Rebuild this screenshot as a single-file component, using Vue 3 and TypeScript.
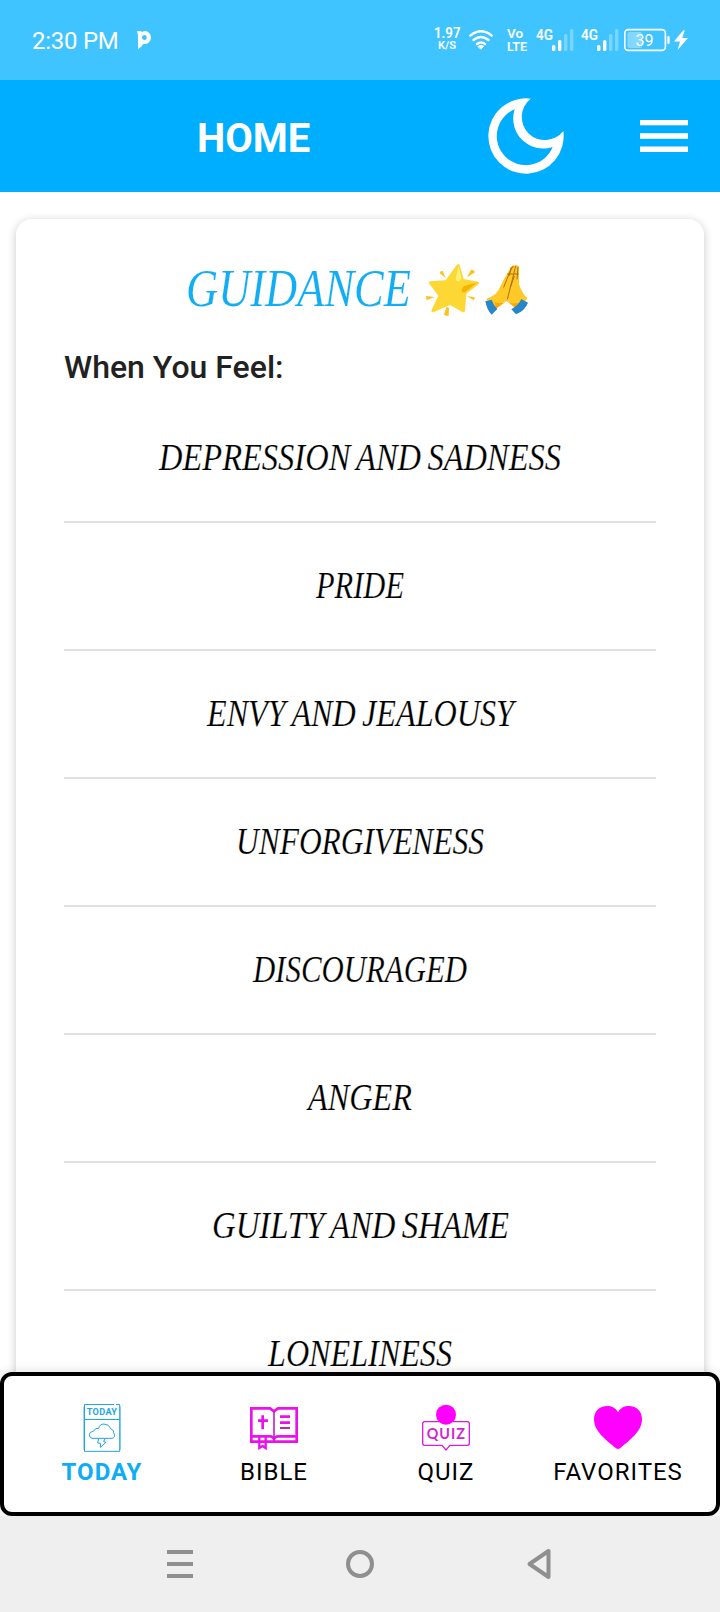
<script setup lang="ts">
interface Feeling {
  label: string
  width: number
}

const feelings: Feeling[] = [
  { label: 'DEPRESSION AND SADNESS', width: 402 },
  { label: 'PRIDE', width: 88 },
  { label: 'ENVY AND JEALOUSY', width: 307 },
  { label: 'UNFORGIVENESS', width: 248 },
  { label: 'DISCOURAGED', width: 214 },
  { label: 'ANGER', width: 104 },
  { label: 'GUILTY AND SHAME', width: 297 },
  { label: 'LONELINESS', width: 184 },
]

const simCards = [1, 2]
</script>

<template>
  <div class="screen">
    <header class="status">
      <span class="clock">2:30 PM</span>
      <svg class="app-mark" width="14" height="20" viewBox="0 0 14 20">
        <path d="M0 1 H4 L5 2.2 Q6.500 1 8 1 A6 6.500 0 0 1 8 14 H6 L4.500 16.500 L1 19 V5 Z M7.300 5 A2.400 2.500 0 1 0 7.400 10 A2.400 2.500 0 1 0 7.300 5 Z" fill="#fff" fill-rule="evenodd" />
      </svg>
      <div class="indicators">
        <svg width="27" height="80" viewBox="0 0 27 80" class="ink">
          <text x="0" y="38" font-size="15" textLength="26.5" lengthAdjust="spacingAndGlyphs">1.97</text>
          <text x="4" y="49" font-size="11" textLength="18" lengthAdjust="spacingAndGlyphs">K/S</text>
        </svg>
        <svg class="wifi" width="24" height="80" viewBox="0 0 24 80" fill="none" stroke="#fff" stroke-width="2.4" stroke-linecap="round">
          <path d="M1.3 35.6 Q12 27 22.7 35.6 M4.5 40 Q12 33.8 19.5 40 M8 44 Q12 41 16 44" />
          <path d="M9.3 46.2 Q12 44.4 14.7 46.2 L12 49 Z" fill="#fff" stroke-width="1" />
        </svg>
        <svg class="volte ink" width="20" height="80" viewBox="0 0 20 80">
          <text x="0" y="38.4" font-size="13" textLength="16" lengthAdjust="spacingAndGlyphs">Vo</text>
          <text x="0" y="51" font-size="13" textLength="20" lengthAdjust="spacingAndGlyphs">LTE</text>
        </svg>
        <svg v-for="sim in simCards" :key="sim" class="sim ink" width="38" height="80" viewBox="0 0 38 80">
          <text x="0" y="40" font-size="14" textLength="17" lengthAdjust="spacingAndGlyphs">4G</text>
          <rect x="16" y="45" width="3.4" height="6" rx="1.5" />
          <rect x="22" y="40" width="3.4" height="11" rx="1.5" />
          <rect x="28" y="34" width="3.4" height="17" rx="1.5" opacity="0.3" />
          <rect x="34" y="29" width="3.4" height="22" rx="1.5" opacity="0.3" />
        </svg>
        <svg class="battery" width="46" height="80" viewBox="0 0 46 80">
          <rect x="0.8" y="29.6" width="40.6" height="20.8" rx="3.5" fill="none" stroke="#fff" stroke-width="1.6" />
          <rect x="3.5" y="32" width="14.5" height="16" rx="2" fill="#fff" opacity="0.35" />
          <rect x="43.3" y="36" width="2.3" height="8" rx="1" fill="#fff" />
          <text x="11.6" y="45.6" font-size="16" fill="#fff" textLength="18" lengthAdjust="spacingAndGlyphs">39</text>
        </svg>
        <svg class="bolt" width="14" height="80" viewBox="0 0 14 80">
          <path d="M9.5 30 L0 41.5 H6 L3.6 50 L14 38 H8.2 L10.8 30.5 Z" fill="#fff" />
        </svg>
      </div>
    </header>

    <div class="toolbar">
      <h1 class="title">HOME</h1>
      <svg class="moon" width="76" height="77" viewBox="85 53 228 231">
        <path fill="#fff" fill-rule="evenodd" d="M213 55 A113 113 0 1 0 311 152 A69.5 69.5 0 1 1 213 55 Z M165 87 A87 87 0 1 0 279 200 A90 90 0 0 1 165 87 Z" />
      </svg>
      <svg class="burger" width="48" height="32" viewBox="0 0 48 32" fill="#fff">
        <rect width="48" height="5.3" />
        <rect y="13.2" width="48" height="5.6" />
        <rect y="26.5" width="48" height="5.5" />
      </svg>
    </div>

    <main class="content">
      <section class="card">
        <div class="heading">
          <svg width="224" height="80" viewBox="0 0 224 80">
            <text class="serif blue" x="0" y="55.500" font-size="52.5" textLength="225" lengthAdjust="spacingAndGlyphs">GUIDANCE</text>
          </svg>
          <svg class="emoji" width="130" height="80" viewBox="0 0 390 240">
            <g fill="#fcc21b">
              <path d="M77 69 Q79 62 86 62 L95 84 Z M171 59 Q181 59 183 67 L159 82 Z M36 138 L61 141 L38 151 Z M158 138 L182 142 L180 151 Z M97 171 L105 173 L104 197 Q95 198 90 194 Z" />
            </g>
            <path d="M136 43 L149 87 L192 95 Q198 98 193 103 L157 131 L153 183 Q151 189 145 186 L108 165 L58 187 Q50 187 53 179 L73 137 L46 101 Q42 94 50 94 L95 91 L128 45 Q133 40 136 43 Z" fill="#fdd835" />
            <path d="M133 49 L142 83 Q139 96 130 94 Q124 91 126 80 Z" fill="#fff176" />
            <path d="M190 97 L151 108 Q140 117 144 125 Q149 131 157 124 Z" fill="#f4b400" />
            <path d="M292 50 Q297 43 304 47 Q314 43 315 53 L315 103 Q325 132 341 145 L312 176 L278 151 L240 176 L216 147 Q244 137 254 119 L273 82 Z" fill="#ffca28" />
            <path d="M242 157 Q267 165 278 150 Q288 165 314 158 L304 174 L278 153 L246 176 Z" fill="#faa700" />
            <path d="M298 48 Q289 59 269 112 M305 47 Q302 62 289 112 M312 50 L309 88 M292 51 L285 78 M280 72 H314 M301 78 Q288 110 280 148" fill="none" stroke="#b56b12" stroke-width="3" />
            <path d="M214 154 L233 149 Q238 165 250 177 L233 194 Q219 181 214 154 Z M322 147 L342 158 Q333 182 306 193 L292 178 Q313 166 322 147 Z" fill="#2686c8" />
          </svg>
        </div>
        <h2 class="prompt">When You Feel:</h2>
        <ul class="list">
          <li v-for="item in feelings" :key="item.label" class="row">
            <svg :width="item.width" height="126" :viewBox="`0 0 ${item.width} 126`">
              <text class="serif" x="0" y="74.700" font-size="37" :textLength="item.width" lengthAdjust="spacingAndGlyphs">{{ item.label }}</text>
            </svg>
          </li>
        </ul>
      </section>
    </main>

    <nav class="tabs">
      <a class="tab active">
        <svg class="icon" viewBox="0 0 144 144">
          <g fill="none" stroke="#1fa6e2" stroke-width="3">
            <path d="M108 1.5 H19.5 V142 H125 V1.5 H114 M19.5 46.5 H125" />
            <path d="M17 8 V137 M127.500 8 V137" stroke-opacity="0.5" />
            <path d="M42 103 Q34 101 34 92 Q34 83 46 82 L53 74 L62 73 Q65 60 78 60 L91 64 L98 74 Q109 79 107 86 Q114 101 102 103 Z" />
            <path d="M62 104 L59 117 L68 118 L67 130 L84 115 L77 113 L81 104" />
          </g>
          <text x="26" y="34" font-size="27" font-weight="700" textLength="92" lengthAdjust="spacingAndGlyphs" class="mini">TODAY</text>
        </svg>
        <span>TODAY</span>
      </a>
      <a class="tab">
        <svg class="icon" viewBox="0 0 144 144" fill="none" stroke="#ec10ec" stroke-width="8">
          <path d="M60 13 H4 V113 H140 V13 H84 L72 22 Z M4 97 H60 Q68 97 72 105 Q76 97 84 97 H140" />
          <path d="M72 20 V110" stroke="#c623c9" stroke-width="5" />
          <path d="M38 34 V76 M24 50 H54 M90 38 H120 M90 56 H120" />
          <path d="M90 72 H120" stroke="#b52bb5" stroke-width="6" />
          <path d="M28 99 V132 L38 126 L47 132 V99" stroke-width="7" />
        </svg>
        <span>BIBLE</span>
      </a>
      <a class="tab">
        <svg class="icon" viewBox="0 0 144 144">
          <path d="M6 53 H138 L142 57 V120 L138 124 H84 L72 138 L60 124 H6 L2 120 V57 Z" fill="none" stroke="#d81edb" stroke-width="4" />
          <circle cx="72" cy="32" r="30" fill="#ff00ff" />
          <text x="14" y="104" font-size="43" font-weight="700" fill="#ce27d2" textLength="116" lengthAdjust="spacing" class="quiz-mini">QUIZ</text>
        </svg>
        <span>QUIZ</span>
      </a>
      <a class="tab">
        <svg class="icon" viewBox="0 0 144 144">
          <path d="M72 25 C80 10 92 6 104 6 C128 6 144 22 144 46 C144 82 108 108 78 133 Q72 137 66 133 C36 108 0 82 0 46 C0 22 16 6 40 6 C52 6 64 10 72 25 Z" fill="#ff00ff" />
        </svg>
        <span>FAVORITES</span>
      </a>
    </nav>

    <footer class="system">
      <svg width="26" height="28" viewBox="0 0 26 28" fill="#8f8f8f">
        <rect width="26" height="4" />
        <rect y="12" width="26" height="4" />
        <rect y="24" width="26" height="4" />
      </svg>
      <svg width="28" height="28" viewBox="0 0 28 28">
        <circle cx="14" cy="14" r="12" fill="none" stroke="#8f8f8f" stroke-width="4" />
      </svg>
      <svg width="26" height="30" viewBox="0 0 26 30">
        <path d="M3.500 15 L22.500 2 V28 Z" fill="none" stroke="#8f8f8f" stroke-width="4" stroke-linejoin="round" />
      </svg>
    </footer>
  </div>
</template>

<style>
body {
  margin: 0;
}
</style>

<style scoped>
.screen {
  display: flex;
  flex-direction: column;
  width: 720px;
  height: 1612px;
  overflow: hidden;
  background: #fff;
  font-family: Roboto, sans-serif;
}

svg {
  display: block;
  flex: none;
  overflow: visible;
}

.status {
  display: flex;
  align-items: center;
  flex: none;
  height: 80px;
  padding: 0 32px;
  background: #40c4ff;
  color: #fff;
}

.clock {
  width: 87px;
  font-size: 24px;
  line-height: 80px;
  letter-spacing: -0.25px;
  white-space: nowrap;
  padding-top: 1px;
}

.app-mark {
  margin-left: 18px;
}

.indicators {
  display: flex;
  margin-left: auto;
}

.ink {
  fill: #fff;
  font-weight: 600;
}

.wifi {
  margin-left: 8px;
}

.volte {
  margin-left: 14px;
}

.sim {
  margin-left: 9px;
}

.sim + .sim {
  margin-left: 7px;
}

.battery {
  margin-left: 5px;
}

.bolt {
  margin-left: 4px;
}

.toolbar {
  display: flex;
  align-items: center;
  flex: none;
  height: 112px;
  padding: 0 32px 0 197px;
  background: #00aeff;
  color: #fff;
}

.title {
  margin: 6px 0 0;
  width: 291px;
  font-size: 40px;
  line-height: 48px;
  font-weight: 700;
}

.burger {
  margin-left: auto;
}

.content {
  flex: none;
  height: 1180px;
  padding: 27px 16px 0;
  box-sizing: border-box;
  overflow: hidden;
}

.card {
  height: 1300px;
  border-radius: 16px;
  background: #fff;
  box-shadow: 0 2px 10px rgba(0, 0, 0, 0.22);
  padding: 31px 48px 0;
  box-sizing: border-box;
}

.heading {
  display: flex;
  height: 80px;
  padding-left: 122px;
}

.emoji {
  margin-left: 4px;
}

.serif {
  font-family: "Liberation Serif", serif;
  font-style: italic;
  word-spacing: -2px;
  fill: #000;
  stroke: #fff;
  stroke-width: 0.2px;
}

.blue {
  fill: #12adf2;
}

.prompt {
  margin: 17px 0 0;
  height: 48px;
  font-size: 32px;
  line-height: 40px;
  font-weight: 500;
  color: #212121;
}

.list {
  margin: 0;
  padding: 0;
  list-style: none;
}

.row {
  display: flex;
  justify-content: center;
  height: 126px;
  border-bottom: 2px solid #e0e0e0;
}

.tabs {
  display: grid;
  grid-template-columns: repeat(4, 172px);
  flex: none;
  height: 144px;
  box-sizing: border-box;
  padding: 28px 12px 0;
  border: 4px solid #000;
  border-radius: 12px;
  background: #fff;
  box-shadow: 0 0 12px rgba(0, 0, 0, 0.12);
}

.tab {
  display: flex;
  flex-direction: column;
  align-items: center;
  color: #000;
  font-size: 24px;
  line-height: 30px;
  letter-spacing: 1px;
}

.tab span {
  margin-top: 5px;
}

.active {
  color: #0fadf5;
  font-weight: 700;
}

.icon {
  width: 48px;
  height: 48px;
}

.mini {
  fill: #1fa6e2;
}

.quiz-mini {
  font-family: Lato, sans-serif;
}

.system {
  display: flex;
  align-items: center;
  justify-content: space-between;
  flex: none;
  height: 96px;
  box-sizing: border-box;
  padding: 0 168px 0 167px;
  background: #efefef;
}
</style>
